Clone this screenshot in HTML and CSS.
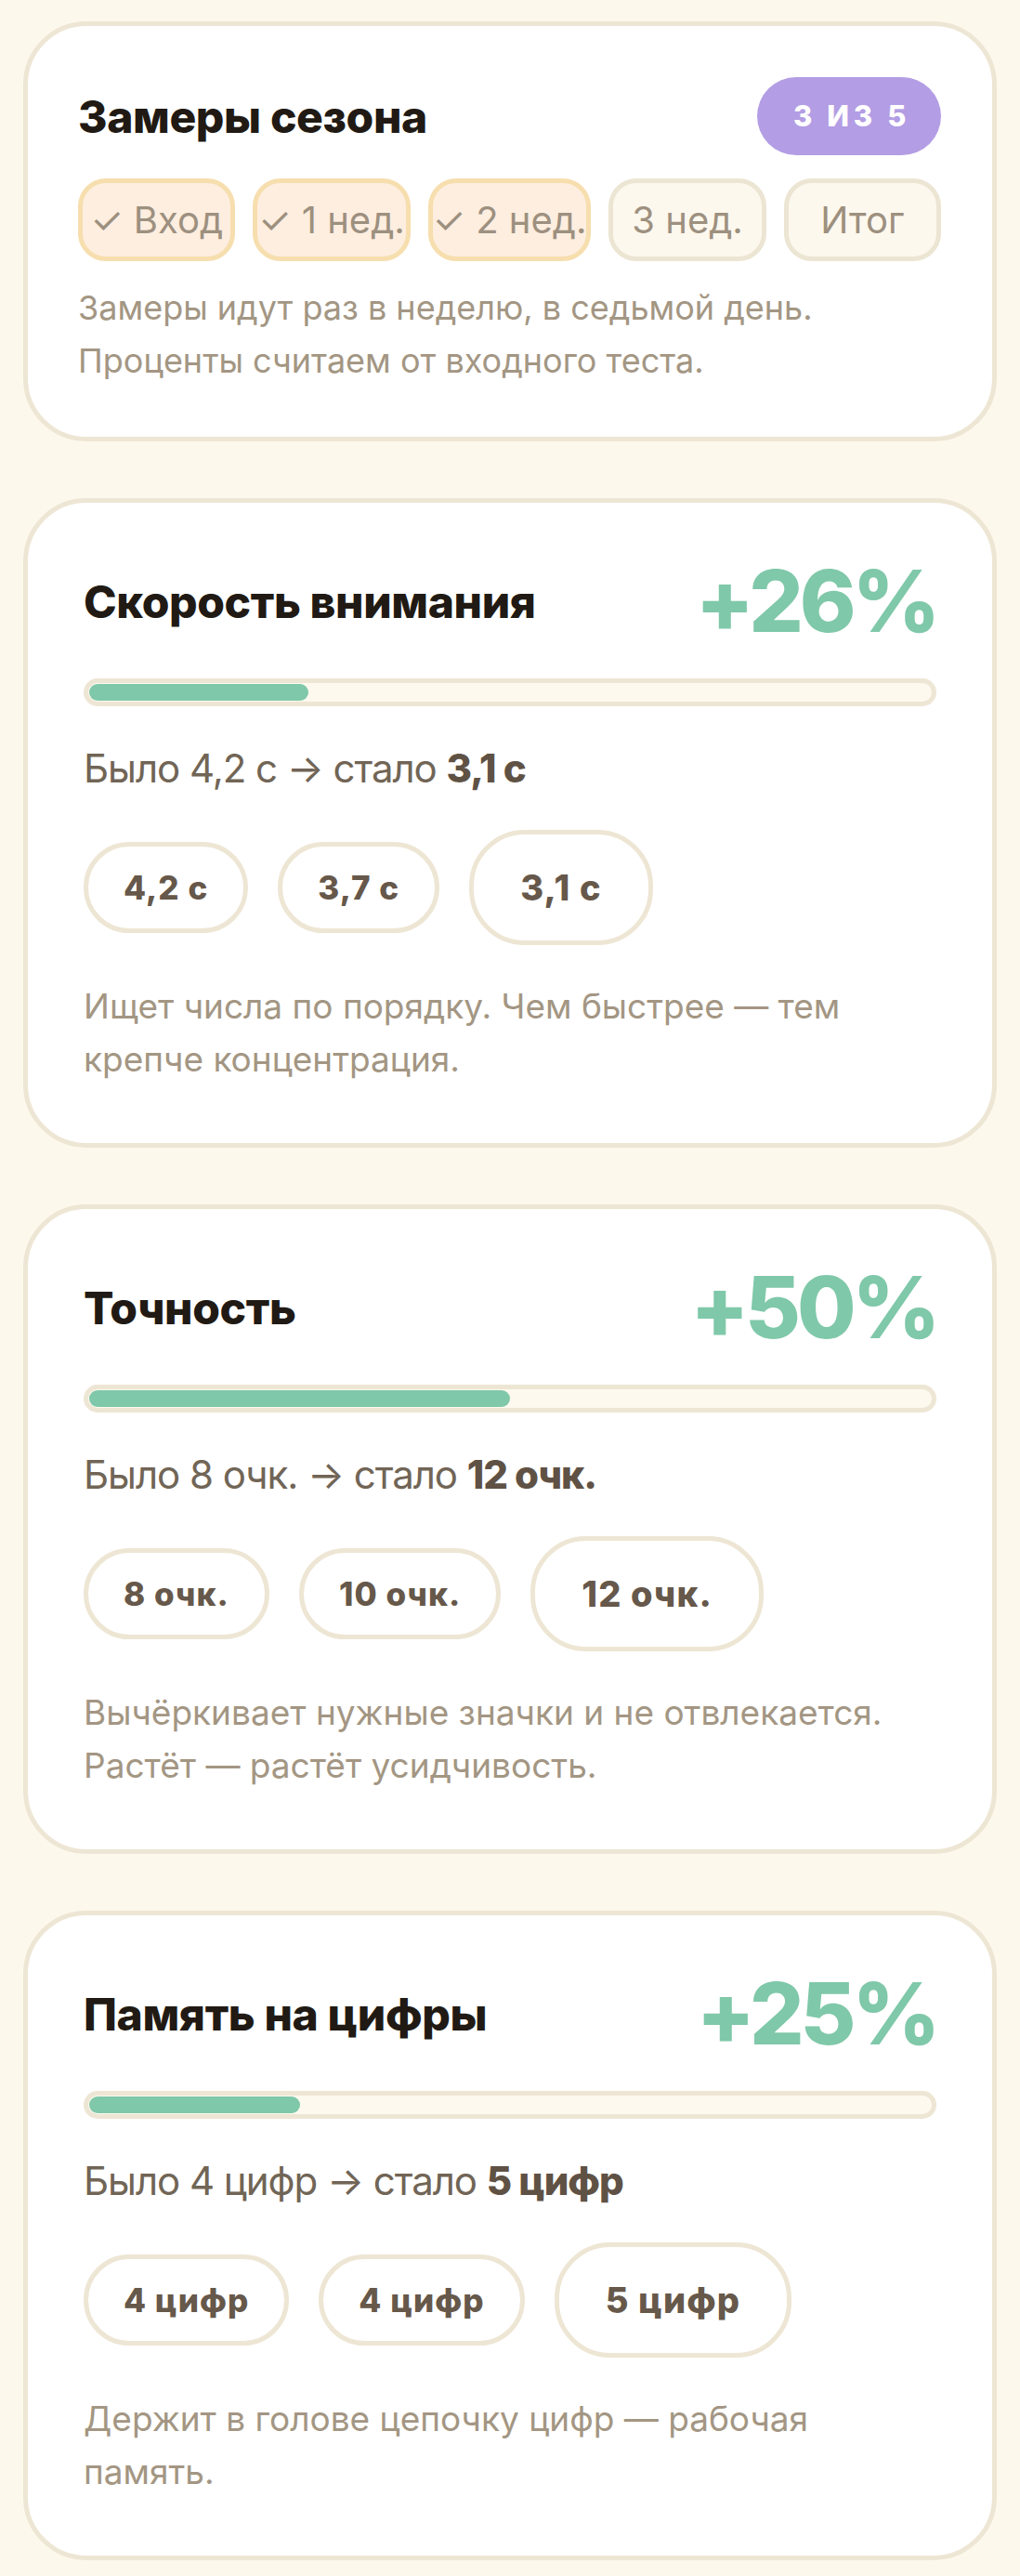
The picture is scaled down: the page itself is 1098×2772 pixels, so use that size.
FILE: index.html
```html
<!DOCTYPE html>
<html lang="ru">
<head>
    <meta charset="UTF-8">
    <meta name="viewport" content="width=device-width, initial-scale=1.0">
    <title>Замеры сезона</title>
    <link rel="stylesheet" href="styles.css">
</head>
<body>
    <div class="page">

        <div class="card season">
            <div class="season-head">
                <h1>Замеры сезона</h1>
                <span class="badge">3 из 5</span>
            </div>
            <div class="steps">
                <span class="step done">✓ Вход</span>
                <span class="step done">✓ 1 нед.</span>
                <span class="step done">✓ 2 нед.</span>
                <span class="step">3 нед.</span>
                <span class="step">Итог</span>
            </div>
            <p class="note">Замеры идут раз в неделю, в седьмой день. Проценты считаем от входного теста.</p>
        </div>

        <div class="card metric">
            <div class="metric-head">
                <h2>Скорость внимания</h2>
                <span class="gain">+26%</span>
            </div>
            <div class="bar"><div class="bar-fill" style="width: 26%"></div></div>
            <p class="change">Было 4,2 с → стало <b>3,1 с</b></p>
            <div class="values">
                <span class="value">4,2 с</span>
                <span class="value">3,7 с</span>
                <span class="value last">3,1 с</span>
            </div>
            <p class="note">Ищет числа по порядку. Чем быстрее — тем крепче концентрация.</p>
        </div>

        <div class="card metric">
            <div class="metric-head">
                <h2>Точность</h2>
                <span class="gain">+50%</span>
            </div>
            <div class="bar"><div class="bar-fill" style="width: 50%"></div></div>
            <p class="change">Было 8 очк. → стало <b>12 очк.</b></p>
            <div class="values">
                <span class="value">8 очк.</span>
                <span class="value">10 очк.</span>
                <span class="value last">12 очк.</span>
            </div>
            <p class="note">Вычёркивает нужные значки и не отвлекается. Растёт — растёт усидчивость.</p>
        </div>

        <div class="card metric">
            <div class="metric-head">
                <h2>Память на цифры</h2>
                <span class="gain">+25%</span>
            </div>
            <div class="bar"><div class="bar-fill" style="width: 25%"></div></div>
            <p class="change">Было 4 цифр → стало <b>5 цифр</b></p>
            <div class="values">
                <span class="value">4 цифр</span>
                <span class="value">4 цифр</span>
                <span class="value last">5 цифр</span>
            </div>
            <p class="note">Держит в голове цепочку цифр — рабочая память.</p>
        </div>

    </div>
</body>
</html>
```

FILE: styles.css
```css
body {
    font-family: 'Inter', 'DejaVu Sans', sans-serif;
    background-color: #fdf8ec;
    color: #211a14;
    margin: 0;
}

.page {
    display: flex;
    flex-direction: column;
    gap: 61px;
    padding: 23px 25px 25px;
}

.card {
    background: #fff;
    border: 5px solid #eee6d4;
    border-radius: 68px;
    display: flex;
    flex-direction: column;
}

h1, h2 {
    margin: 0;
    font-size: 48px;
    font-weight: 800;
    letter-spacing: -0.008em;
    color: #211a14;
}

.note {
    margin: 0;
    font-size: 36px;
    line-height: 57px;
    color: #a39683;
}

/* season card */
.season {
    padding: 55px 55px 53px 54px;
}

.season-head {
    display: flex;
    justify-content: space-between;
    align-items: center;
}

.badge {
    background: #b39de4;
    color: #fff;
    font-size: 31px;
    font-weight: 800;
    text-transform: uppercase;
    letter-spacing: 0.15em;
    line-height: 36px;
    padding: 24px 33px 24px 39px;
    border-radius: 42px;
}

.steps {
    display: flex;
    gap: 19px;
    margin: 25px 0 22px;
}

.step {
    flex: 1;
    text-align: center;
    white-space: nowrap;
    font-size: 40px;
    line-height: 49px;
    padding: 15px 0;
    color: #9d907f;
    background: #fdf8ee;
    border: 5px solid #ece5d3;
    border-radius: 30px;
}

.step.done {
    background: #fdeee0;
    border-color: #f7deae;
}

/* metric cards */
.metric {
    padding: 60px 60px 62px;
    gap: 37px;
}

.metric .note {
    font-size: 37px;
}

.metric-head {
    display: flex;
    justify-content: space-between;
    align-items: center;
}

.gain {
    font-size: 92px;
    line-height: 92px;
    font-weight: 800;
    letter-spacing: -0.045em;
    color: #7fc8a9;
}

.bar {
    border: 5px solid #eee6d4;
    background: #fdf9ef;
    border-radius: 15px;
    padding: 1px;
}

.bar-fill {
    height: 18px;
    border-radius: 9px;
    background: #7fc8a9;
}

.change {
    margin: 0;
    font-size: 42px;
    line-height: 59px;
    letter-spacing: -0.025em;
    color: #716556;
}

.change b {
    font-weight: 800;
    color: #5f5245;
}

.values {
    display: flex;
    align-items: center;
    gap: 32px;
}

.value {
    font-size: 35px;
    font-weight: 800;
    letter-spacing: 0.03em;
    line-height: 40px;
    padding: 24px 38px;
    color: #66584a;
    border: 5px solid #eee6d4;
    border-radius: 60px;
}

.value.last {
    font-size: 38px;
    line-height: 44px;
    padding: 35px 50px;
}
```
